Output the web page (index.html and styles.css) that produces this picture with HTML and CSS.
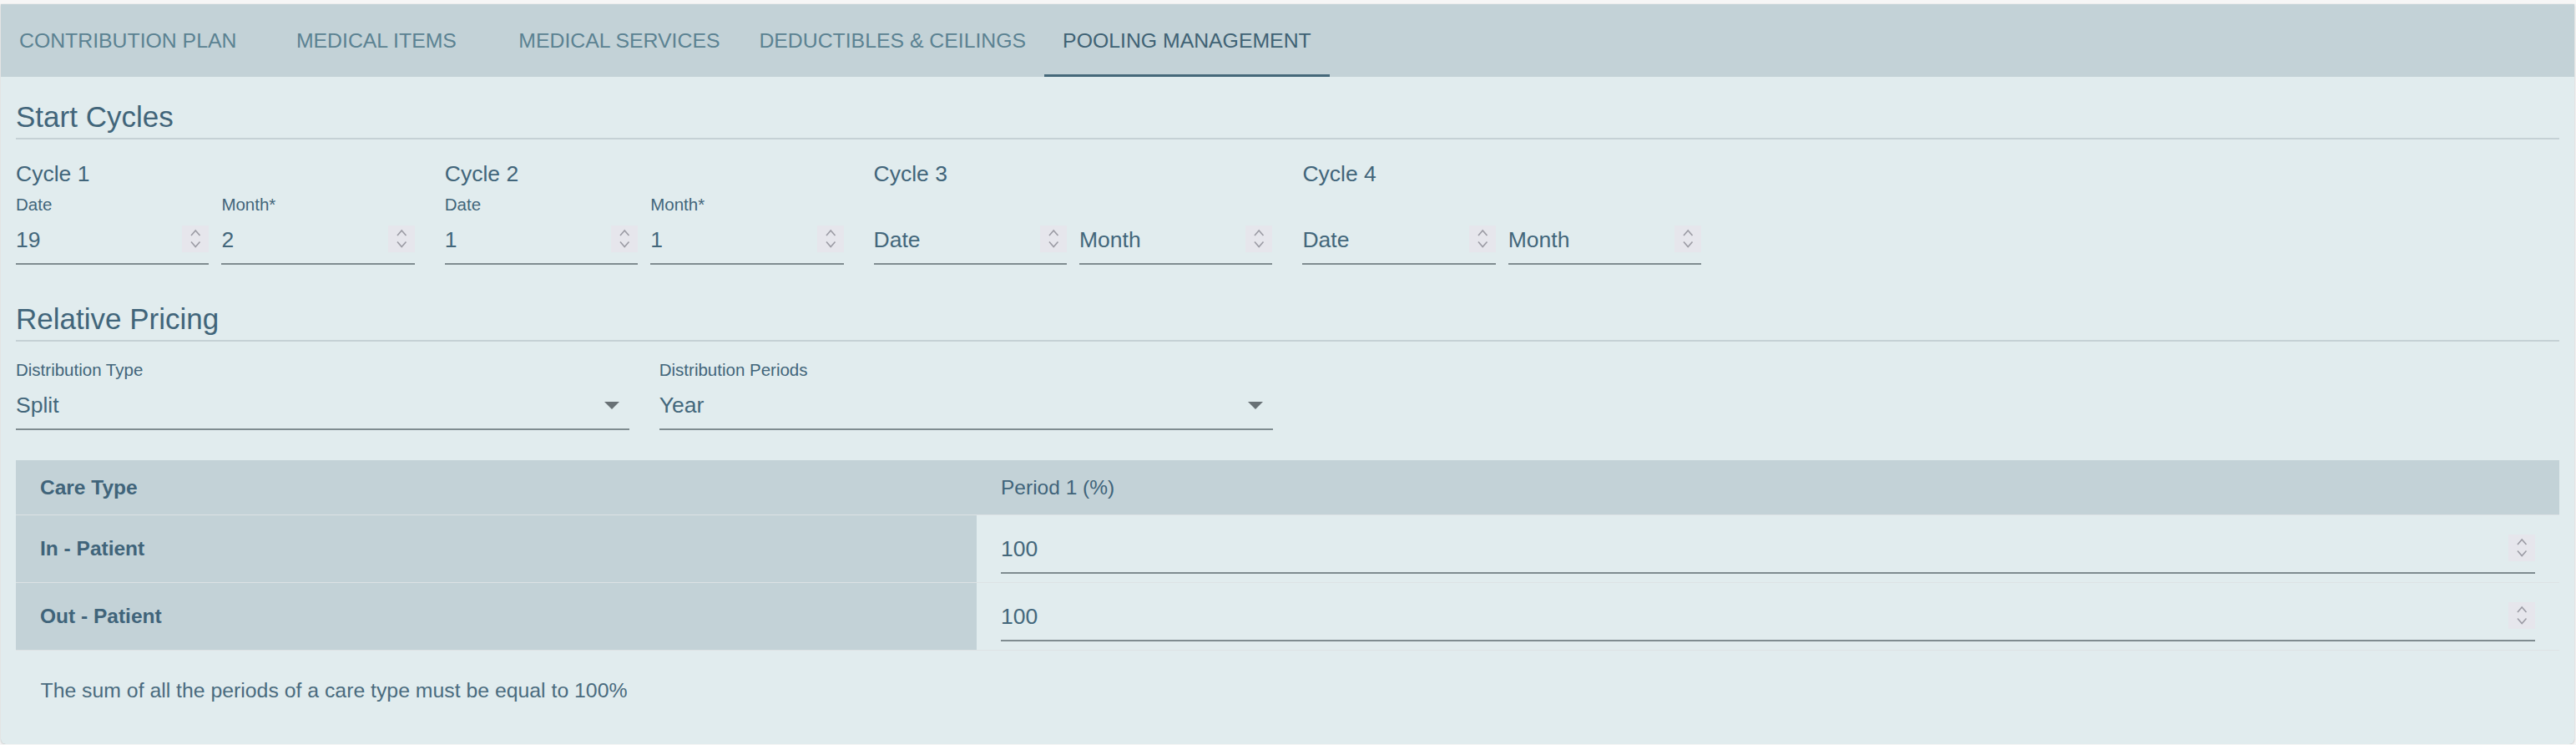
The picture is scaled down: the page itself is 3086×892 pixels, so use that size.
FILE: index.html
```html
<!DOCTYPE html>
<html lang="en">
<head>
<meta charset="utf-8">
<title>Pooling Management</title>
<link rel="stylesheet" href="styles.css">
</head>
<body>
<div class="app">
  <div class="paper">
    <nav class="tabs">
      <div class="tab">Contribution Plan</div>
      <div class="tab">Medical Items</div>
      <div class="tab">Medical Services</div>
      <div class="tab">Deductibles &amp; Ceilings</div>
      <div class="tab active">Pooling Management</div>
    </nav>
    <div class="content">
      <h2 class="section-title">Start Cycles</h2>
      <div class="cycles">
        <div class="cycle">
          <div class="cycle-title">Cycle 1</div>
          <div class="pair">
            <div class="field">
              <span class="field-label">Date</span>
              <div class="field-box"><span class="field-value">19</span><svg class="spinner" viewBox="0 0 32 32" width="32" height="32"><path d="M11 12l5.2-6 5.3 6M11 19.5l5.2 6 5.3-6" fill="none" stroke="#9b9ba4" stroke-width="1.6"/></svg></div>
            </div>
            <div class="field">
              <span class="field-label">Month*</span>
              <div class="field-box"><span class="field-value">2</span><svg class="spinner" viewBox="0 0 32 32" width="32" height="32"><path d="M11 12l5.2-6 5.3 6M11 19.5l5.2 6 5.3-6" fill="none" stroke="#9b9ba4" stroke-width="1.6"/></svg></div>
            </div>
          </div>
        </div>
        <div class="cycle">
          <div class="cycle-title">Cycle 2</div>
          <div class="pair">
            <div class="field">
              <span class="field-label">Date</span>
              <div class="field-box"><span class="field-value">1</span><svg class="spinner" viewBox="0 0 32 32" width="32" height="32"><path d="M11 12l5.2-6 5.3 6M11 19.5l5.2 6 5.3-6" fill="none" stroke="#9b9ba4" stroke-width="1.6"/></svg></div>
            </div>
            <div class="field">
              <span class="field-label">Month*</span>
              <div class="field-box"><span class="field-value">1</span><svg class="spinner" viewBox="0 0 32 32" width="32" height="32"><path d="M11 12l5.2-6 5.3 6M11 19.5l5.2 6 5.3-6" fill="none" stroke="#9b9ba4" stroke-width="1.6"/></svg></div>
            </div>
          </div>
        </div>
        <div class="cycle">
          <div class="cycle-title">Cycle 3</div>
          <div class="pair">
            <div class="field">
              <span class="field-label"></span>
              <div class="field-box"><span class="field-value">Date</span><svg class="spinner" viewBox="0 0 32 32" width="32" height="32"><path d="M11 12l5.2-6 5.3 6M11 19.5l5.2 6 5.3-6" fill="none" stroke="#9b9ba4" stroke-width="1.6"/></svg></div>
            </div>
            <div class="field">
              <span class="field-label"></span>
              <div class="field-box"><span class="field-value">Month</span><svg class="spinner" viewBox="0 0 32 32" width="32" height="32"><path d="M11 12l5.2-6 5.3 6M11 19.5l5.2 6 5.3-6" fill="none" stroke="#9b9ba4" stroke-width="1.6"/></svg></div>
            </div>
          </div>
        </div>
        <div class="cycle">
          <div class="cycle-title">Cycle 4</div>
          <div class="pair">
            <div class="field">
              <span class="field-label"></span>
              <div class="field-box"><span class="field-value">Date</span><svg class="spinner" viewBox="0 0 32 32" width="32" height="32"><path d="M11 12l5.2-6 5.3 6M11 19.5l5.2 6 5.3-6" fill="none" stroke="#9b9ba4" stroke-width="1.6"/></svg></div>
            </div>
            <div class="field">
              <span class="field-label"></span>
              <div class="field-box"><span class="field-value">Month</span><svg class="spinner" viewBox="0 0 32 32" width="32" height="32"><path d="M11 12l5.2-6 5.3 6M11 19.5l5.2 6 5.3-6" fill="none" stroke="#9b9ba4" stroke-width="1.6"/></svg></div>
            </div>
          </div>
        </div>
      </div>

      <h2 class="section-title section-gap">Relative Pricing</h2>
      <div class="selects">
        <div class="field select-field">
          <span class="field-label">Distribution Type</span>
          <div class="field-box select-box"><span class="field-value">Split</span><svg class="caret" width="18" height="9" viewBox="0 0 18 9"><path d="M0 0h18L9 9z" fill="#687175"/></svg></div>
        </div>
        <div class="field select-field">
          <span class="field-label">Distribution Periods</span>
          <div class="field-box select-box"><span class="field-value">Year</span><svg class="caret" width="18" height="9" viewBox="0 0 18 9"><path d="M0 0h18L9 9z" fill="#687175"/></svg></div>
        </div>
      </div>

      <table class="grid">
        <colgroup><col class="col-type"><col></colgroup>
        <thead>
          <tr><th class="th-type">Care Type</th><th class="th-period">Period 1 (%)</th></tr>
        </thead>
        <tbody>
          <tr>
            <td class="td-type">In - Patient</td>
            <td class="td-input"><div class="field-box cell-box"><span class="field-value">100</span><svg class="spinner" viewBox="0 0 32 32" width="32" height="32"><path d="M11 12l5.2-6 5.3 6M11 19.5l5.2 6 5.3-6" fill="none" stroke="#9b9ba4" stroke-width="1.6"/></svg></div></td>
          </tr>
          <tr>
            <td class="td-type">Out - Patient</td>
            <td class="td-input"><div class="field-box cell-box"><span class="field-value">100</span><svg class="spinner" viewBox="0 0 32 32" width="32" height="32"><path d="M11 12l5.2-6 5.3 6M11 19.5l5.2 6 5.3-6" fill="none" stroke="#9b9ba4" stroke-width="1.6"/></svg></div></td>
          </tr>
        </tbody>
      </table>

      <p class="note">The sum of all the periods of a care type must be equal to 100%</p>
    </div>
  </div>
</div>
</body>
</html>
```
FILE: styles.css
```css
html, body {
  margin: 0;
  padding: 0;
  overflow: hidden;
}
body {
  background: #f6f6f6;
  font-family: "Liberation Sans", Arial, Helvetica, sans-serif;
  color: #41657a;
}
.app {
  padding: 5px 2px 0 1px;
}
.paper {
  background: #e1ecee;
  border-radius: 0 0 6px 6px;
  box-shadow: 0 1px 3px rgba(0, 0, 0, 0.16), 0 0 1px rgba(0, 0, 0, 0.18);
  height: 886px;
  box-sizing: border-box;
  overflow: hidden;
}
.tabs {
  display: flex;
  height: 87px;
  background: #c3d2d7;
}
.tab {
  min-width: 291px;
  padding: 0 22px;
  box-sizing: border-box;
  display: flex;
  align-items: center;
  justify-content: center;
  font-size: 24.8px;
  text-transform: uppercase;
  color: #5b8292;
  white-space: nowrap;
}
.tab.active {
  color: #3f6274;
  box-shadow: inset 0 -3px 0 #456879;
}
.content {
  padding: 27px 18px 0 18px;
}
.section-title {
  margin: 0;
  font-size: 35px;
  font-weight: 400;
  line-height: 42px;
  padding-bottom: 4px;
  border-bottom: 2px solid #c5d1d5;
  color: #41657a;
}
.section-gap {
  margin-top: 44px;
}
.cycles {
  display: flex;
  gap: 36px;
  margin-top: 25px;
}
.cycle {
  width: 477.8px;
}
.cycle-title {
  font-size: 26.5px;
  line-height: 32px;
}
.pair {
  display: grid;
  grid-template-columns: 1fr 1fr;
  column-gap: 15px;
  margin-top: 8px;
}
.field-label {
  display: block;
  height: 25px;
  font-size: 20.5px;
  line-height: 25px;
  white-space: nowrap;
}
.field-box {
  display: flex;
  align-items: flex-start;
  margin-top: 13px;
  padding-bottom: 11px;
  border-bottom: 2px solid #7f8c90;
}
.field-value {
  flex: 1;
  font-size: 26.5px;
  line-height: 34px;
  color: #43677b;
}
.spinner {
  display: block;
  width: 32px;
  height: 32px;
  background: #e6e6ec;
  flex: none;
}
.selects {
  display: flex;
  gap: 36px;
  margin-top: 21px;
}
.select-field {
  width: 734.75px;
}
.select-box {
  align-items: center;
}
.caret {
  display: block;
  flex: none;
  margin-right: 12px;
}
.grid {
  width: 100%;
  margin-top: 36px;
  border-collapse: separate;
  border-spacing: 0;
  table-layout: fixed;
}
.col-type {
  width: 1151px;
}
.grid th {
  height: 65px;
  padding: 0 29px;
  text-align: left;
  background: #c3d2d7;
  border-bottom: 1px solid #dde2e4;
  font-size: 24.5px;
  color: #40647a;
}
.th-type {
  font-weight: 700;
}
.th-period {
  font-weight: 400;
}
.td-type {
  height: 80px;
  padding: 0 29px;
  background: #c3d2d7;
  border-bottom: 1px solid #dde2e4;
  font-size: 24.5px;
  font-weight: 700;
  color: #40647a;
}
.td-input {
  padding: 23px 29px 10px 29px;
  border-bottom: 1px solid #dde2e4;
}
.cell-box {
  margin-top: 0;
}
.note {
  margin: 33px 0 0 0;
  padding-left: 29.5px;
  font-size: 24.8px;
  line-height: 30px;
  color: #4a6b7e;
}
```
